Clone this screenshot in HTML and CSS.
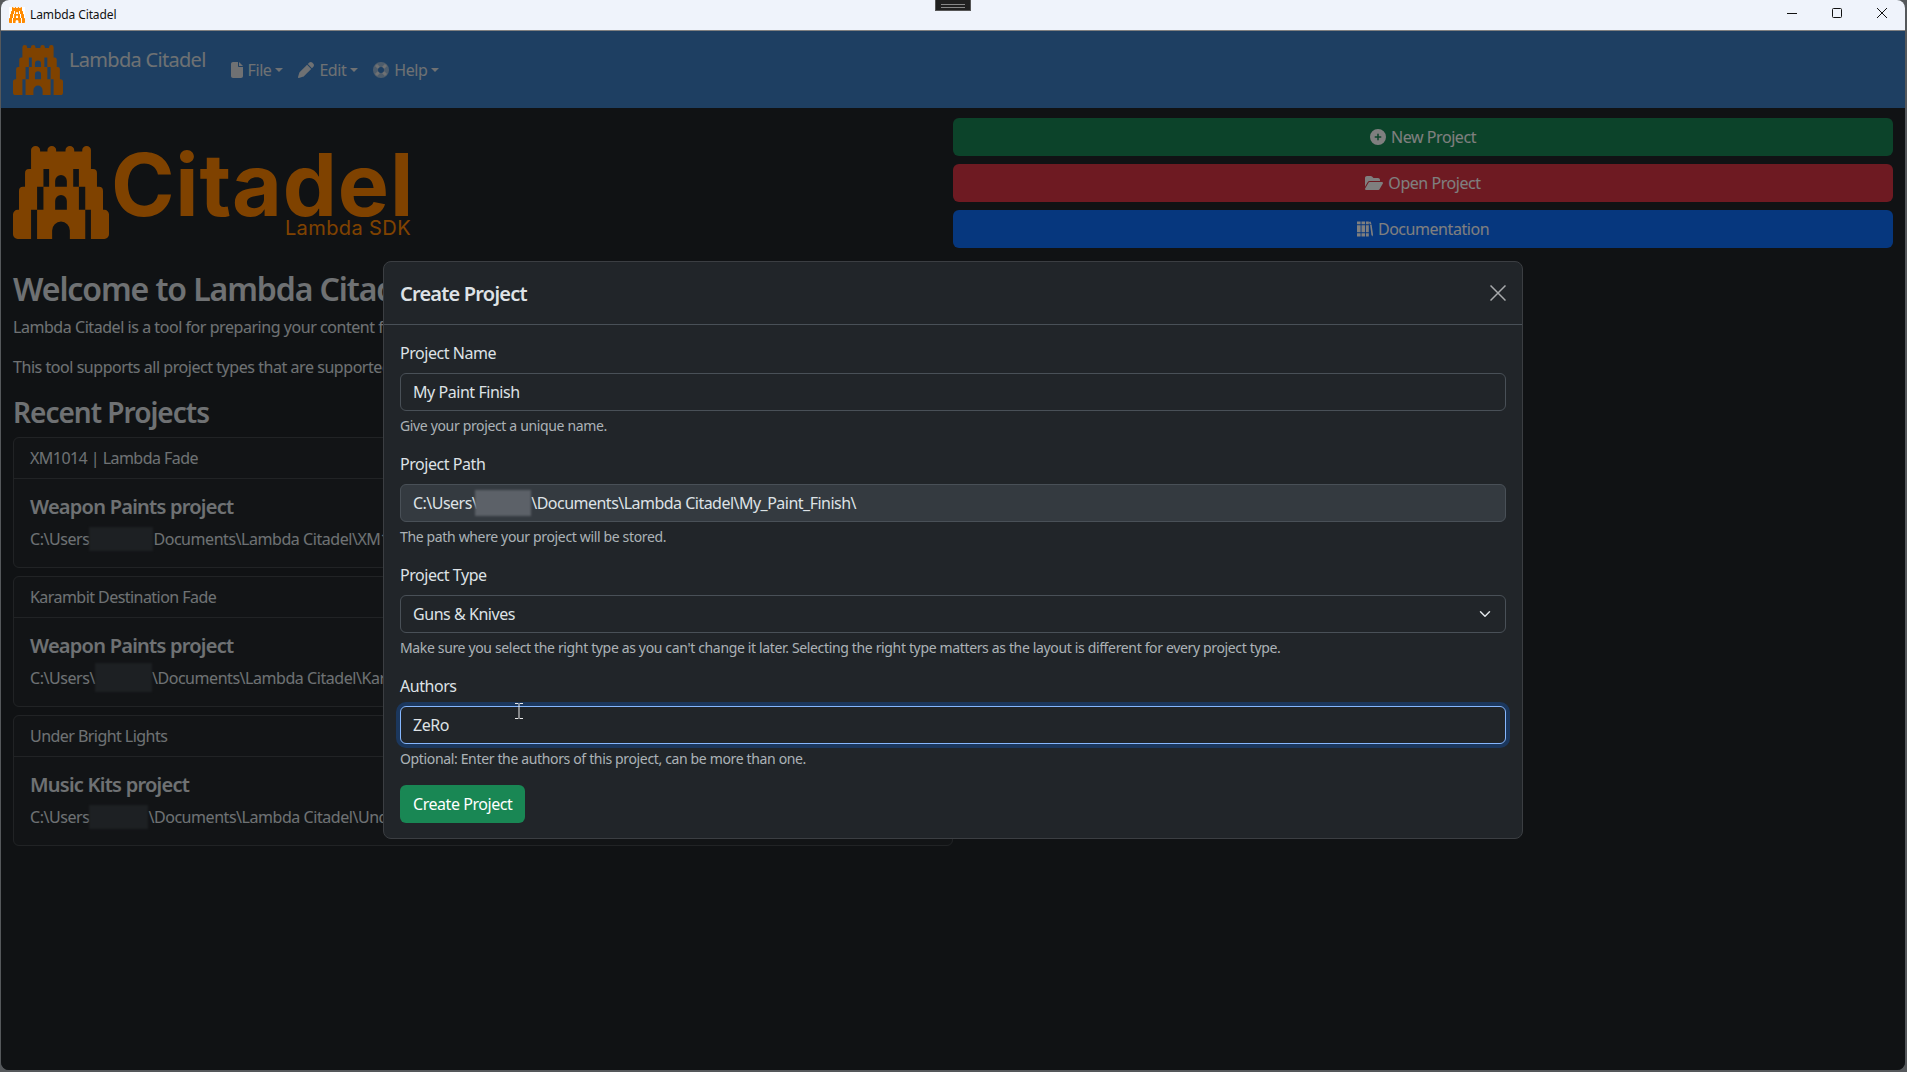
FILE: index.html
```html
<!DOCTYPE html>
<html lang="en">
<head>
  <meta charset="UTF-8">
  <title>Lambda Citadel</title>
  <link rel="stylesheet" href="styles.css">
</head>
<body>
  <svg class="defs" width="0" height="0">
    <symbol id="tower" viewBox="39 52 287 274" preserveAspectRatio="none">
      <path fill-rule="evenodd" d="M93 120V64a13.5 12 0 0 1 27 0V68H142V64a13 12 0 0 1 26 0V68H196V64a13 12 0 0 1 26 0V68H246V64a13 12 0 0 1 26 0V120H278a12 12 0 0 1 12 12V172H296a12 12 0 0 1 12 12V240H312a14 14 0 0 1 14 14V312a14 14 0 0 1-14 14H53a14 14 0 0 1-14-14V254a14 14 0 0 1 14-14H57V184a12 12 0 0 1 12-12H75V132a12 12 0 0 1 12-12Z
        M130 120H147V172H130Z M219 120H236V172H219Z M111 172H130V240H111Z M236 172H255V240H236Z M93 240H111V326H93Z M255 240H272V326H255Z
        M165 172V155a17.500 17.500 0 0 1 35 0V172Z M165 240V214a17.500 17.500 0 0 1 35 0V240Z M156 326V301a26.500 26.500 0 0 1 53 0V326Z"/>
    </symbol>
  </svg>

  <div class="window">
    <div class="titlebar">
      <span class="app-icon"><svg width="16" height="16"><use href="#tower"/></svg></span>
      <span class="app-title">Lambda Citadel</span>
      <div class="window-controls">
        <svg width="10" height="10" viewBox="0 0 10 10"><path d="M0 5.500H10" stroke="#111" fill="none"/></svg>
        <svg width="10" height="10" viewBox="0 0 10 10"><rect x=".5" y=".5" width="9" height="9" rx="1" stroke="#111" fill="none"/></svg>
        <svg width="10" height="10" viewBox="0 0 10 10"><path d="M0 0L10 10M10 0L0 10" stroke="#111" fill="none"/></svg>
      </div>
    </div>

    <div class="app">
      <nav class="navbar">
        <a class="brand">
          <svg class="brand-logo"><use href="#tower"/></svg>
          <span>Lambda Citadel</span>
        </a>
        <ul class="nav">
          <li class="nav-link">
            <svg width="12" height="16" viewBox="0 0 384 512"><path d="M0 64C0 28.700 28.700 0 64 0H224V128c0 17.700 14.300 32 32 32H384V448c0 35.300-28.700 64-64 64H64c-35.300 0-64-28.700-64-64V64zm384 64H256V0L384 128z"/></svg>
            File<i class="caret"></i>
          </li>
          <li class="nav-link">
            <svg width="16" height="16" viewBox="0 0 512 512"><path d="M362.700 19.300L314.300 67.700 444.300 197.700l48.400-48.400c25-25 25-65.500 0-90.500L453.300 19.300c-25-25-65.500-25-90.500 0zm-71 71L58.600 323.500c-10.400 10.400-18 23.300-22.200 37.400L1 481.200C-1.500 489.700 .8 498.800 7 505s15.300 8.500 23.700 6.100l120.300-35.400c14.100-4.200 27-11.800 37.400-22.200L421.700 220.300 291.700 90.300z"/></svg>
            Edit<i class="caret"></i>
          </li>
          <li class="nav-link">
            <svg width="16" height="16" viewBox="0 0 16 16"><circle class="ring" cx="8" cy="8" r="5.500"/><path class="ring-bands" d="M3 3L5.800 5.800M13 3L10.200 5.800M3 13L5.800 10.200M13 13L10.200 10.200"/></svg>
            Help<i class="caret"></i>
          </li>
        </ul>
      </nav>

      <div class="main">
        <div class="col-left">
          <div class="logo">
            <svg class="logo-tower"><use href="#tower"/></svg>
            <div class="logo-text">
              <span class="logo-name">Citadel</span>
              <span class="logo-sub">Lambda SDK</span>
            </div>
          </div>

          <h2>Welcome to Lambda Citadel</h2>
          <p>Lambda Citadel is a tool for preparing your content for the Workshop.</p>
          <p>This tool supports all project types that are supported by the Workshop.</p>

          <h3>Recent Projects</h3>
          <div class="card">
            <div class="card-header">XM1014 | Lambda Fade</div>
            <div class="card-body">
              <h5>Weapon Paints project</h5>
              <p>C:\Users<span class="blur blur-1"></span>Documents\Lambda Citadel\XM1014_Lambda_Fade\</p>
            </div>
          </div>
          <div class="card">
            <div class="card-header">Karambit Destination Fade</div>
            <div class="card-body">
              <h5>Weapon Paints project</h5>
              <p>C:\Users\<span class="blur blur-2"></span>\Documents\Lambda Citadel\Karambit_Destination_Fade\</p>
            </div>
          </div>
          <div class="card">
            <div class="card-header">Under Bright Lights</div>
            <div class="card-body">
              <h5>Music Kits project</h5>
              <p>C:\Users<span class="blur blur-3"></span>\Documents\Lambda Citadel\Under_Bright_Lights\</p>
            </div>
          </div>
        </div>

        <div class="col-right">
          <button class="btn btn-success">
            <svg width="16" height="16" viewBox="0 0 512 512"><path d="M256 512A256 256 0 1 0 256 0a256 256 0 1 0 0 512zM232 344V280H168c-13.300 0-24-10.700-24-24s10.700-24 24-24h64V168c0-13.300 10.700-24 24-24s24 10.700 24 24v64h64c13.300 0 24 10.700 24 24s-10.700 24-24 24H280v64c0 13.300-10.700 24-24 24s-24-10.700-24-24z"/></svg>
            New Project
          </button>
          <button class="btn btn-danger">
            <svg width="18" height="16" viewBox="0 0 576 512"><path d="M88.700 223.800L0 375.800V96C0 60.700 28.700 32 64 32H181.500c17 0 33.300 6.700 45.300 18.700l26.500 26.500c12 12 28.300 18.700 45.300 18.700H416c35.300 0 64 28.700 64 64v32H144c-22.800 0-43.800 12.100-55.300 31.800zm27.600 16.100C122.100 230 132.600 224 144 224H544c11.500 0 22 6.100 27.700 16.100s5.700 22.200-.1 32.100l-112 192C453.900 474 443.400 480 432 480H32c-11.500 0-22-6.100-27.700-16.100s-5.700-22.200 .1-32.100l112-192z"/></svg>
            Open Project
          </button>
          <button class="btn btn-primary">
            <svg width="16" height="16" viewBox="0 0 16 16"><path d="M0 .6h3.600v2.600H0zM0 4.200h3.600v7.100H0zM0 12.300h3.600v3.100H0zM4.500 .6h3.600v2.600H4.500zM4.500 4.200h3.600v7.100H4.500zM4.500 12.300h3.600v3.100H4.500zM9 .6h2.800v2.600H9zM9 4.200h2.800v7.100H9zM9 12.300h2.800v3.100H9zM12 1l1.500-.6.900 2.500-1.600.6zM13.100 4l1.500-.6 1.400 10-.5 2-1.100-1.300z"/></svg>
            Documentation
          </button>
        </div>
      </div>

      <div class="backdrop"></div>

      <div class="modal-wrap">
        <div class="modal">
          <div class="modal-header">
            <h4>Create Project</h4>
            <svg class="btn-close" width="16" height="16" viewBox="0 0 16 16"><path d="M.5 .5L15.500 15.500M15.500 .5L.5 15.500" stroke="#a8aaac" stroke-width="1.500" fill="none"/></svg>
          </div>
          <form class="modal-body">
            <div class="field">
              <label>Project Name</label>
              <input class="form-control" type="text" value="My Paint Finish">
              <div class="form-text">Give your project a unique name.</div>
            </div>
            <div class="field">
              <label>Project Path</label>
              <div class="form-control readonly">C:\Users\<span class="blur blur-path"></span>\Documents\Lambda Citadel\My_Paint_Finish\</div>
              <div class="form-text">The path where your project will be stored.</div>
            </div>
            <div class="field">
              <label>Project Type</label>
              <select class="form-control form-select">
                <option>Guns &amp; Knives</option>
              </select>
              <div class="form-text">Make sure you select the right type as you can't change it later. Selecting the right type matters as the layout is different for every project type.</div>
            </div>
            <div class="field">
              <label>Authors</label>
              <input class="form-control focused" type="text" value="ZeRo">
              <svg class="ibeam" width="8" height="16" viewBox="0 0 8 16"><path d="M0 .5H3.500M4.500 .5H8M4 1V15M0 15.500H3.500M4.500 15.500H8" stroke="#e8e8e8" fill="none"/></svg>
              <div class="form-text">Optional: Enter the authors of this project, can be more than one.</div>
            </div>
            <button class="btn btn-create" type="button">Create Project</button>
          </form>
        </div>
      </div>
    </div>

    <div class="drag-handle"></div>
  </div>
</body>
</html>
```

FILE: styles.css
```css
html, body {
  margin: 0;
  height: 100%;
  overflow: hidden;
}

body {
  background-color: #55585b;
  color: #dee2e6;
  font-family: "Noto Sans", "Open Sans", sans-serif;
  font-size: 16px;
  line-height: 24px;
  letter-spacing: -0.45px;
}

.defs {
  position: absolute;
}

.window {
  position: relative;
  display: flex;
  flex-direction: column;
  width: 1904px;
  height: 1070px;
  margin-left: 1px;
  border-radius: 8px;
  overflow: hidden;
  background-color: #212529;
}

/* native title bar */
.titlebar {
  display: flex;
  align-items: center;
  flex: none;
  height: 30px;
  padding-left: 8px;
  background-color: #eff3fb;
  border-bottom: 1px solid #808080;
  color: #111;
  font-size: 12px;
}

.app-icon {
  display: flex;
  fill: #ff8a00;
  background-color: #fff;
}

.app-title {
  margin-left: 5px;
  letter-spacing: -0.1px;
}

.window-controls {
  display: flex;
  gap: 35px;
  margin-left: auto;
  margin-right: 18px;
  margin-top: -4px;
}

.drag-handle {
  position: absolute;
  top: -1px;
  left: 934px;
  width: 34px;
  height: 10px;
  background-color: #202020;
  border: 1px solid #555;
}

.drag-handle::after {
  content: "";
  position: absolute;
  top: 4px;
  left: 5px;
  right: 5px;
  height: 2px;
  border-top: 1px solid #888;
  border-bottom: 1px solid #888;
}

.app {
  position: relative;
  flex: 1;
  background-color: #212529;
}

/* navbar */
.navbar {
  display: flex;
  align-items: flex-start;
  height: 63px;
  padding: 14px 0 0 12px;
  background-color: #3d7fc5;
}

.brand {
  display: flex;
  gap: 6px;
  font-size: 20px;
  line-height: 30px;
  letter-spacing: -0.7px;
}

.brand-logo {
  width: 50px;
  height: 50px;
  fill: #ff8500;
}

.nav {
  display: flex;
  gap: 15px;
  margin: 13px 0 0 25px;
  padding: 0;
  list-style: none;
}

.nav-link {
  display: flex;
  align-items: center;
  gap: 5px;
  fill: #dee2e6;
}

.ring {
  fill: none;
  stroke: #dee2e6;
  stroke-width: 5;
  opacity: 0.6;
}

.ring-bands {
  fill: none;
  stroke: #dee2e6;
  stroke-width: 3;
}

.caret {
  width: 0;
  height: 0;
  margin-left: -1px;
  border-top: 4px solid #dee2e6;
  border-left: 4px solid transparent;
  border-right: 4px solid transparent;
}

/* page columns */
.main {
  display: flex;
}

.col-left {
  width: 940px;
  padding: 38px 0 0 12px;
}

.col-right {
  flex: 1;
  display: flex;
  flex-direction: column;
  gap: 8px;
  padding: 10px 12px 0 0;
}

.logo {
  display: flex;
  gap: 6px;
  height: 94px;
  margin-bottom: 30px;
  color: #ff8500;
}

.logo-tower {
  width: 96px;
  height: 93px;
  fill: #ff8500;
}

.logo-text {
  display: flex;
  flex-direction: column;
  align-items: flex-end;
  width: 299px;
}

.logo-name {
  font-family: "Inter", sans-serif;
  font-size: 86px;
  font-weight: 700;
  line-height: 78px;
  letter-spacing: 0.8px;
}

.logo-sub {
  margin-top: -6px;
  margin-right: 3px;
  font-family: "Inter", sans-serif;
  font-size: 20px;
  line-height: 20px;
  letter-spacing: 0.4px;
}

h2, h3, h4, h5 {
  margin: 0 0 8px;
  font-weight: 600;
}

h2 {
  margin-bottom: 7px;
  font-size: 32px;
  line-height: 38px;
  letter-spacing: -1.1px;
}

h3 {
  font-size: 28px;
  line-height: 34px;
  letter-spacing: -1px;
}

h4 {
  margin: 0;
  padding-top: 1px;
  height: 29px;
  font-size: 20px;
  line-height: 30px;
  letter-spacing: -0.8px;
}

h5 {
  font-size: 20px;
  line-height: 24px;
  letter-spacing: -0.75px;
}

p {
  margin: 0 0 16px;
  white-space: nowrap;
}

.card {
  margin-bottom: 8px;
  background-color: #24282c;
  border: 1px solid #43474b;
  border-radius: 6px;
  overflow: hidden;
}

.card-header {
  padding: 8px 16px;
  border-bottom: 1px solid #43474b;
  letter-spacing: -0.55px;
}

.card-body {
  padding: 16px 16px 0;
}

.card-body p {
  height: 24px;
  margin-bottom: 16px;
}

.blur {
  display: inline-block;
  height: 24px;
  margin-top: -4px;
  vertical-align: middle;
  background-color: #3a4046;
  filter: blur(1px);
}

.blur-1 {
  width: 64px;
}

.blur-2 {
  width: 57px;
  height: 29px;
}

.blur-3 {
  width: 59px;
}

.blur-path {
  width: 56px;
  height: 26px;
  margin-left: -2px;
  background-color: #5c6168;
}

/* buttons */
.btn {
  height: 38px;
  padding: 6px 12px;
  border: 1px solid transparent;
  border-radius: 6px;
  color: #fff;
  fill: #fff;
  font: inherit;
  letter-spacing: inherit;
}

.col-right .btn {
  display: flex;
  align-items: center;
  justify-content: center;
  gap: 5px;
}

.btn-success, .btn-create {
  background-color: #198754;
}

.btn-danger {
  background-color: #dc3545;
}

.btn-primary {
  background-color: #0d6efd;
}

/* modal */
.backdrop {
  position: absolute;
  inset: 0;
  background-color: rgba(0, 0, 0, 0.5);
}

.modal-wrap {
  position: absolute;
  inset: 0;
  display: flex;
  justify-content: center;
  padding-top: 230px;
}

.modal {
  box-sizing: border-box;
  width: 1140px;
  height: 578px;
  background-color: #212529;
  border: 1px solid #3b3e42;
  border-radius: 8px;
}

.modal-header {
  display: flex;
  align-items: center;
  justify-content: space-between;
  padding: 16px;
  border-bottom: 1px solid #495057;
}

.modal-body {
  padding: 16px;
}

.field {
  position: relative;
  margin-bottom: 16px;
}

label {
  display: block;
  margin-bottom: 8px;
}

.form-control {
  display: block;
  box-sizing: border-box;
  width: 100%;
  height: 38px;
  padding: 6px 12px;
  background-color: #212529;
  border: 1px solid #495057;
  border-radius: 6px;
  color: #dee2e6;
  font: inherit;
  letter-spacing: inherit;
  outline: none;
}

.readonly {
  background-color: #343a40;
  white-space: nowrap;
  letter-spacing: -0.52px;
}

.form-select {
  appearance: none;
  background-image: url("data:image/svg+xml,%3csvg xmlns='http://www.w3.org/2000/svg' viewBox='0 0 16 16'%3e%3cpath fill='none' stroke='%23dee2e6' stroke-linecap='round' stroke-linejoin='round' stroke-width='2' d='m2 5 6 6 6-6'/%3e%3c/svg%3e");
  background-repeat: no-repeat;
  background-position: right 12px center;
  background-size: 16px 12px;
}

.focused {
  border-color: #86b7fe;
  box-shadow: 0 0 0 4px rgba(13, 110, 253, 0.25);
}

.form-text {
  margin-top: 4px;
  color: rgba(222, 226, 230, 0.75);
  font-size: 14px;
  line-height: 21px;
  letter-spacing: -0.35px;
}

.ibeam {
  position: absolute;
  top: 29px;
  left: 115px;
}
```
